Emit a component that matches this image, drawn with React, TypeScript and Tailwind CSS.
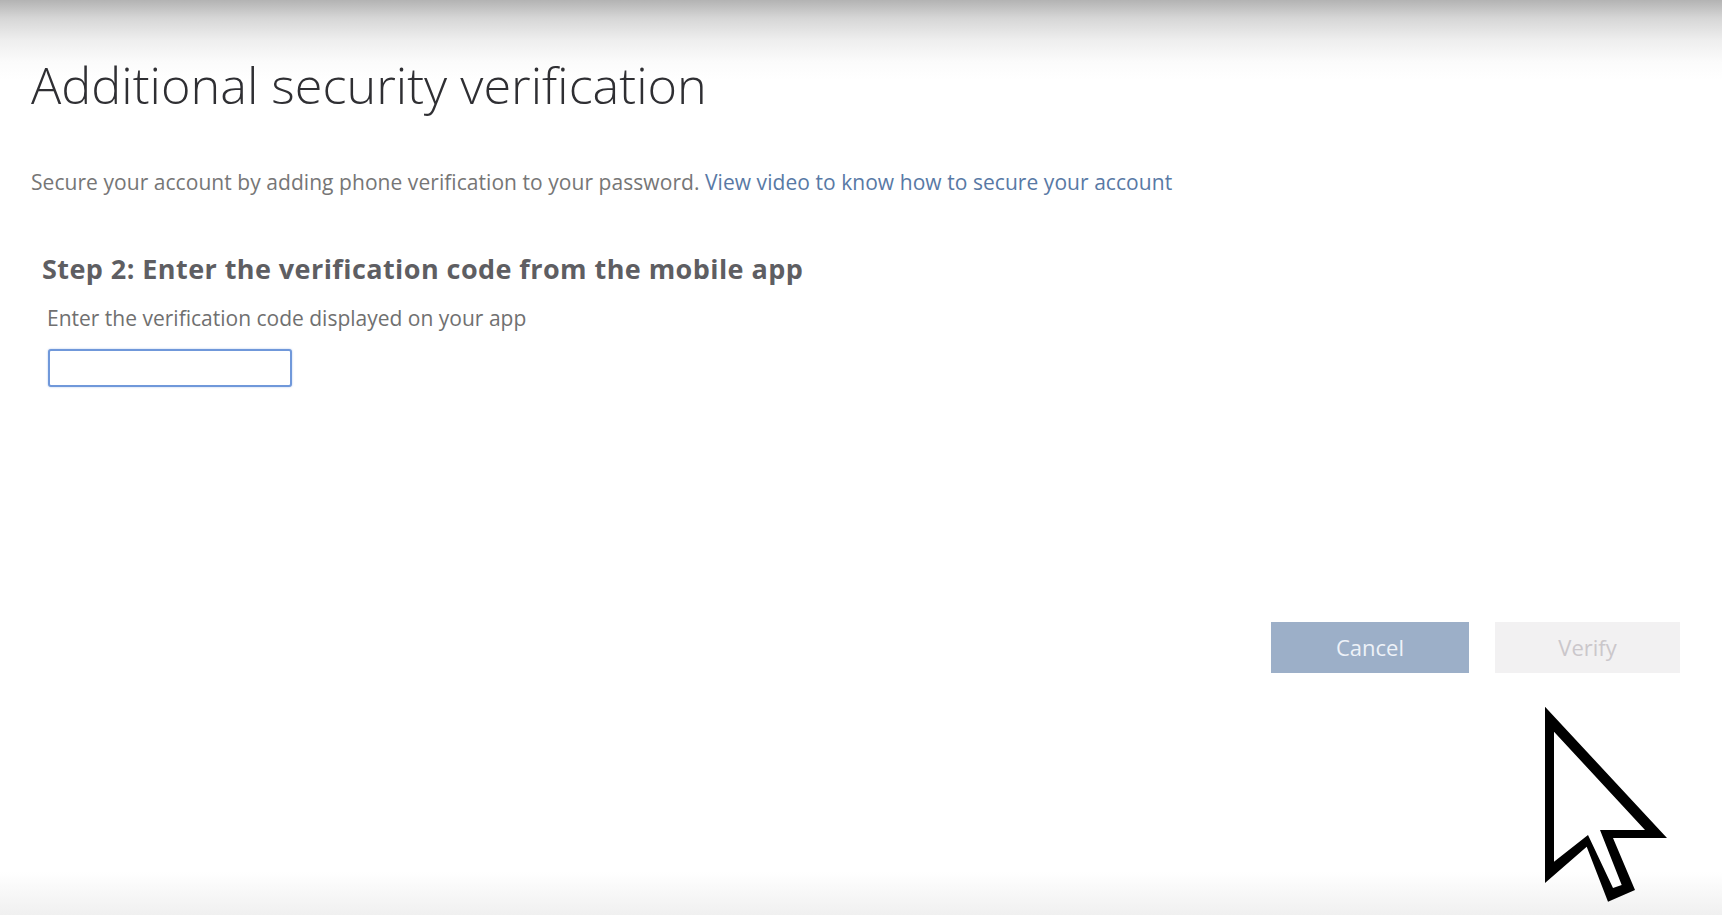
import React from "react";

function Cursor() {
  return (
    <svg
      className="absolute left-[1540px] top-[700px] w-[135px] h-[210px]"
      viewBox="1540 700 135 210"
      aria-hidden="true"
    >
      <polygon
        points="1545,706.7 1545,883 1586.7,846.7 1608,901.7 1635,890 1613,838 1667,838"
        fill="#000"
      />
      <polygon
        points="1554,731.7 1554,861.7 1588,835 1613,888 1621.7,885 1600,830 1645,830"
        fill="#fff"
      />
    </svg>
  );
}

export default function App() {
  return (
    <div
      className="relative w-[1722px] h-[915px] overflow-hidden bg-[linear-gradient(to_bottom,#b3b3b3_0px,#d6d6d6_18px,#eeeeee_40px,#fbfbfb_62px,#ffffff_80px,#ffffff_872px,#f0f0f0_915px)]"
      style={{ fontFamily: '"Open Sans", "Noto Sans", sans-serif' }}
    >
      <div className="pl-[31px] pt-[55px] flex flex-col items-start">
        <h1 className="text-[50.4px] leading-[60px] font-light text-[#2f2f33]">
          Additional security verification
        </h1>
        <p className="mt-[53px] text-[21px] leading-[28px] text-[#767676] tracking-[0.0025em]">
          Secure your account by adding phone verification to your password.{" "}
          <a className="text-[#5879a5]">View video to know how to secure your account</a>
        </p>
        <h2 className="mt-[57px] ml-[11px] text-[27px] leading-[32px] font-bold text-[#5e5e62] tracking-[0.016em]">
          Step 2: Enter the verification code from the mobile app
        </h2>
        <p className="mt-[20px] ml-[16px] text-[21px] leading-[26px] text-[#707070]">
          Enter the verification code displayed on your app
        </p>
        <input
          type="text"
          className="mt-[18px] ml-[17px] w-[244px] h-[38px] border-2 border-[#7098da] rounded-[3px] bg-white outline-none shadow-[0_0_2px_rgba(112,152,218,0.6)]"
        />
      </div>
      <div className="mt-[235px] pr-[42px] flex justify-end gap-[26px]">
        <button className="w-[198px] h-[51px] bg-[#9cafc8] text-[#eef2f8] text-[22px]">
          Cancel
        </button>
        <button className="w-[185px] h-[51px] bg-[#f2f1f2] text-[#cbc7cb] text-[22px]">
          Verify
        </button>
      </div>
      <Cursor />
    </div>
  );
}
